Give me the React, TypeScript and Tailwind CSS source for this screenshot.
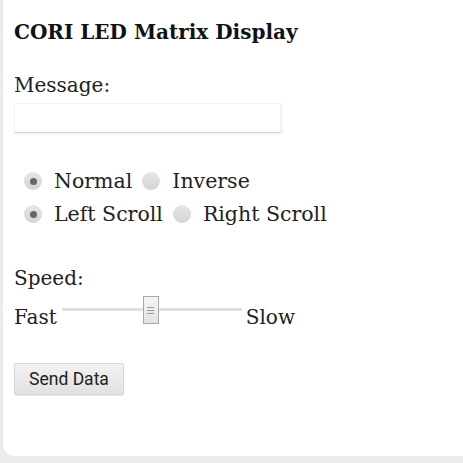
import React from "react";

type Opt = { label: string; checked: boolean };

const rows: Opt[][] = [
  [
    { label: "Normal", checked: true },
    { label: "Inverse", checked: false },
  ],
  [
    { label: "Left Scroll", checked: true },
    { label: "Right Scroll", checked: false },
  ],
];

function Radio({ checked }: { checked: boolean }) {
  return (
    <span className="w-[18px] h-[18px] rounded-full bg-gradient-to-b from-[#e6e6e6] to-[#d4d4d4] flex items-center justify-center shrink-0">
      {checked && <span className="w-[7px] h-[7px] rounded-full bg-[#666]" />}
    </span>
  );
}

function Slider() {
  return (
    <div className="relative w-[180px] h-[28px] ml-[5px]">
      <div className="absolute left-0 right-0 top-[12px] h-[3px] bg-[#e3e0d8]" />
      <div className="absolute left-[81px] top-0 w-[16px] h-[28px] border border-[#a9a9a9] bg-gradient-to-b from-[#f4f4f4] to-[#e2e2e2] flex flex-col items-center justify-center gap-[2px]">
        <span className="w-[7px] h-px bg-[#9a9a9a]" />
        <span className="w-[7px] h-px bg-[#9a9a9a]" />
        <span className="w-[7px] h-px bg-[#9a9a9a]" />
      </div>
    </div>
  );
}

export default function App() {
  return (
    <div className="w-[463px] h-[463px] bg-[#ebebeb] overflow-hidden">
      <div
        className="ml-[3px] h-[456px] bg-white rounded-bl-[12px] pl-[11px] pt-[20px] text-[#222]"
        style={{ fontFamily: '"DejaVu Serif", serif' }}
      >
        <h1 className="text-[20px] leading-[24px] font-bold text-[#111]">CORI LED Matrix Display</h1>
        <div className="mt-[29px] text-[20px] leading-[24px]">Message:</div>
        <div className="mt-[6px] w-[267px] h-[30px] border border-[#f2f2f2] border-b-[#d9d9d9] shadow-[1px_1px_2px_rgba(0,0,0,0.08)]" />

        <div className="mt-[36px] ml-[10px] flex flex-col gap-[9px] text-[20.5px] leading-[24px]">
          {rows.map((row, i) => (
            <div key={i} className="flex items-center">
              {row.map((o, j) => (
                <div key={o.label} className={"flex items-center gap-[12px] " + (j > 0 ? "ml-[10px]" : "")}>
                  <Radio checked={o.checked} />
                  <span>{o.label}</span>
                </div>
              ))}
            </div>
          ))}
        </div>

        <div className="mt-[40px] text-[20px] leading-[24px]">Speed:</div>
        <div className="mt-[6px] flex items-start text-[20px] leading-[24px]">
          <span className="mt-[9px]">Fast</span>
          <Slider />
          <span className="mt-[9px] ml-[4px]">Slow</span>
        </div>

        <button
          className="mt-[34px] w-[110px] h-[32px] rounded-[2px] border border-[#d6d6d6] bg-gradient-to-b from-[#f3f3f3] to-[#e1e1e1] text-[17.5px] text-[#222] shadow-[0_1px_1px_rgba(0,0,0,0.1)]"
          style={{ fontFamily: "Roboto, sans-serif" }}
        >
          Send Data
        </button>
      </div>
    </div>
  );
}
